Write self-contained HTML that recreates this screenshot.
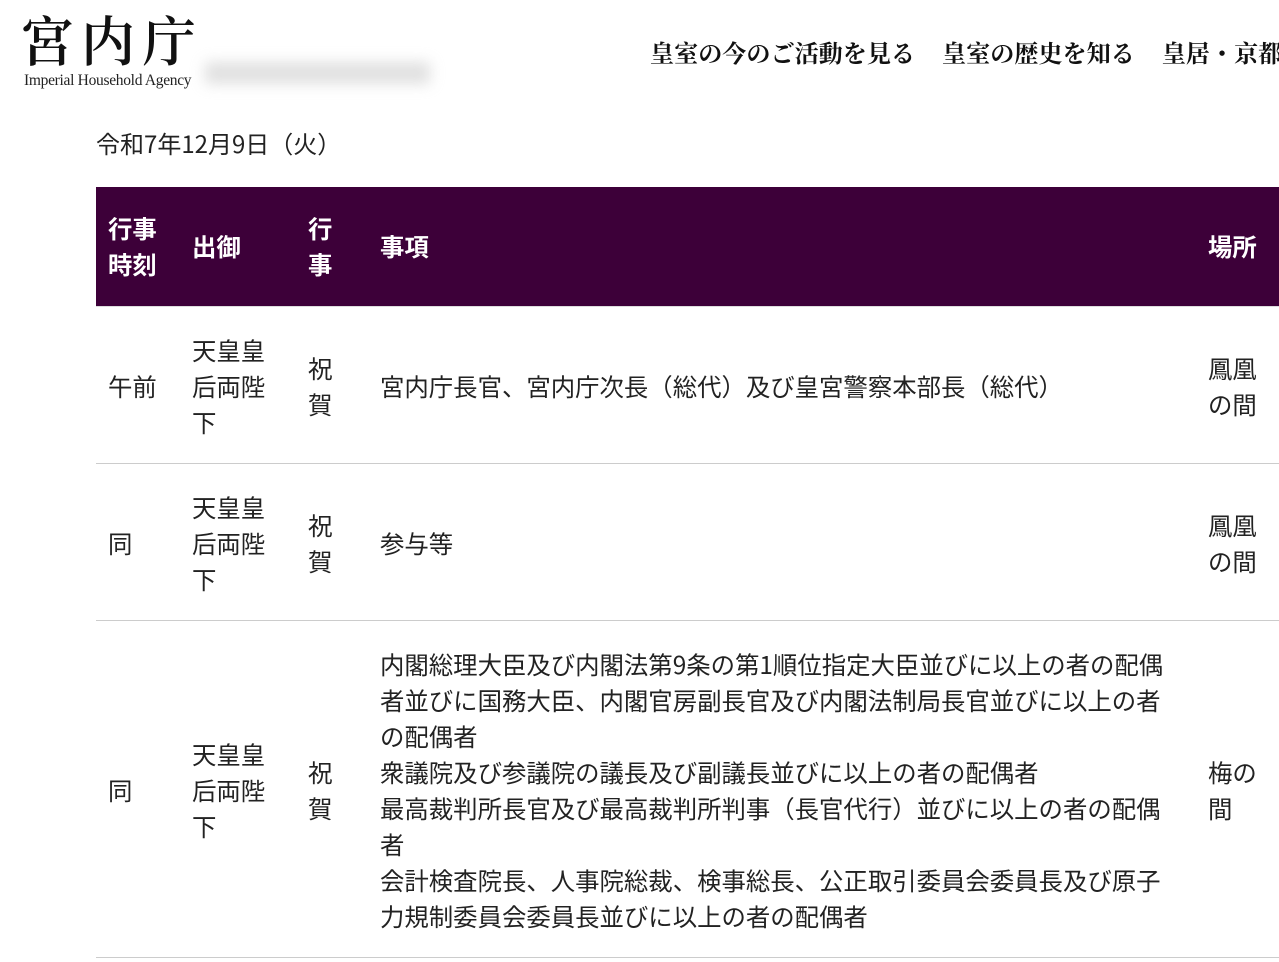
<!DOCTYPE html>
<html><head><meta charset="utf-8">
<style>
html,body{margin:0;padding:0;background:#fff;overflow:hidden;width:1279px;height:962px}
body{font-family:"Noto Sans CJK JP",sans-serif;color:#222;position:relative}
.logo{position:absolute;left:20px;top:6px;font-family:"Noto Serif CJK SC",serif;font-size:54px;letter-spacing:7px;color:#111;line-height:66px;font-weight:600}
.sub{position:absolute;left:24px;top:72px;font-family:"Liberation Serif",serif;font-size:15.5px;color:#222;letter-spacing:-0.3px}
.blur{position:absolute;left:205px;top:62px;width:225px;height:22px;background:#ccc;filter:blur(7px);opacity:.6}
.nav{position:absolute;left:650px;top:35px;font-family:"Noto Serif CJK SC",serif;font-weight:bold;font-size:24.1px;white-space:nowrap;color:#111;line-height:34px}
.nav span{margin-right:27px}
.date{position:absolute;left:96px;top:125px;font-size:24px;line-height:36px}
table{position:absolute;left:96px;top:187px;width:1200px;border-collapse:collapse;table-layout:fixed;font-size:24.4px;line-height:36px}
th{background:#3d0039;color:#fff;text-align:left;font-weight:bold;padding:12px 12px;height:95px;vertical-align:middle;border-bottom:1px solid #ddd}
td{padding:26px 12px 22px;vertical-align:middle;border-bottom:1px solid #ccc}
td.c4,th.c4{padding-right:28px}
td.c5{padding-right:26px}
</style></head><body>
<div class="logo">宮内庁</div>
<div class="sub">Imperial Household Agency</div>
<div class="blur"></div>
<div class="nav"><span>皇室の今のご活動を見る</span><span>皇室の歴史を知る</span><span>皇居・京都御所</span></div>
<div class="date">令和7年12月9日（火）</div>
<table>
<colgroup><col style="width:84px"><col style="width:116px"><col style="width:72px"><col style="width:828px"><col style="width:100px"></colgroup>
<tr><th>行事時刻</th><th>出御</th><th style="padding-right:20px">行事</th><th class="c4">事項</th><th>場所</th></tr>
<tr><td>午前</td><td>天皇皇后両陛下</td><td style="padding-right:20px">祝賀</td><td class="c4">宮内庁長官、宮内庁次長（総代）及び皇宮警察本部長（総代）</td><td class="c5">鳳凰の間</td></tr>
<tr><td>同</td><td>天皇皇后両陛下</td><td style="padding-right:20px">祝賀</td><td class="c4">参与等</td><td class="c5">鳳凰の間</td></tr>
<tr><td>同</td><td>天皇皇后両陛下</td><td style="padding-right:20px">祝賀</td><td class="c4">内閣総理大臣及び内閣法第9条の第1順位指定大臣並びに以上の者の配偶者並びに国務大臣、内閣官房副長官及び内閣法制局長官並びに以上の者の配偶者<br>衆議院及び参議院の議長及び副議長並びに以上の者の配偶者<br>最高裁判所長官及び最高裁判所判事（長官代行）並びに以上の者の配偶者<br>会計検査院長、人事院総裁、検事総長、公正取引委員会委員長及び原子力規制委員会委員長並びに以上の者の配偶者</td><td class="c5">梅の間</td></tr>
</table>
</body></html>
